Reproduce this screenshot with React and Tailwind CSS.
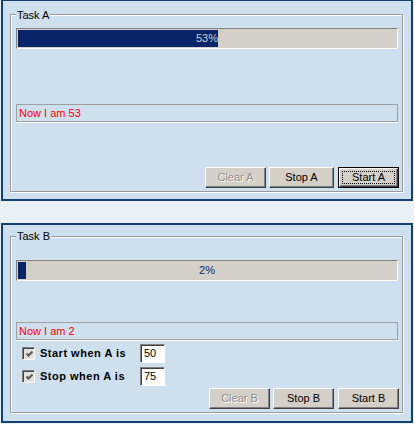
import React from 'react';

const FACE = 'bg-[#d4d0c8]';

function WinButton({ children, disabled, isDefault, width }) {
  if (isDefault) {
    return (
      <div className={`h-[21px] border border-black ${width}`}>
        <div className={`h-full ${FACE} border border-t-white border-l-white border-b-[#404040] border-r-[#404040] shadow-[inset_-1px_-1px_0_#808080] p-[2px]`}>
          <div className="h-full border border-dotted border-black flex items-center justify-center text-black">
            {children}
          </div>
        </div>
      </div>
    );
  }
  return (
    <div
      className={`h-[21px] ${width} ${FACE} border border-t-white border-l-white border-b-[#404040] border-r-[#404040] shadow-[inset_-1px_-1px_0_#808080] flex items-center justify-center ${
        disabled ? 'text-[#8d8d8d] text-shadow-[1px_1px_0_#ffffff]' : 'text-black'
      }`}
    >
      {children}
    </div>
  );
}

function ProgressBar({ value }) {
  // light text only matters once the fill reaches the centred label
  const showInverse = value > 45;
  return (
    <div className="ml-[5px] w-[382px] h-[21px] border border-t-[#808080] border-l-[#808080] border-b-white border-r-white bg-[#d4d0c8] p-[1px]">
      <div className="relative h-full w-full">
        <div className="absolute inset-0 flex items-center justify-center text-[#0a246a]">{value}%</div>
        <div className="absolute left-0 top-0 bottom-0 overflow-hidden bg-[#0a246a]" style={{ width: `${value}%` }}>
          {showInverse && (
            <div className="w-[378px] h-full flex items-center justify-center text-[#d4d0c8]">{value}%</div>
          )}
        </div>
      </div>
    </div>
  );
}

function StatusBox({ text }) {
  return (
    <div className="ml-[5px] w-[382px] h-[19px] border-b border-white">
      <div className="h-full border border-[#a0a0a0] flex items-center pl-[2px] text-[#ff0000]">{text}</div>
    </div>
  );
}

function GroupBox({ title, height, labelTop, children }) {
  return (
    <div
      className={`relative ml-[7px] w-[393px] ${height} border border-[#9a9a9a] shadow-[1px_1px_0_#ffffff,inset_1px_1px_0_#ffffff] flex flex-col`}
    >
      <span className={`absolute left-[5px] ${labelTop} h-[13px] leading-[13px] px-[1px] bg-[#cedfee] text-black`}>{title}</span>
      {children}
    </div>
  );
}

function CheckRow({ label, value }) {
  return (
    <div className="flex items-center h-[19px]">
      <div className="ml-[11px] w-[13px] h-[13px] border border-t-[#808080] border-l-[#808080] border-b-white border-r-white">
        <div className="w-full h-full bg-[#e4e2dc] shadow-[inset_1px_1px_0_#404040] flex items-center justify-center">
          <svg width="7" height="7" viewBox="0 0 7 7" className="ml-[1px] mt-[1px]">
            <polyline points="0.5,2.5 2.5,4.5 6.5,0.5" fill="none" stroke="#5a5a5a" strokeWidth="2" />
          </svg>
        </div>
      </div>
      <span className="ml-[5px] w-[100px] font-bold tracking-[0.5px] text-black">{label}</span>
      <div className="w-[25px] h-[19px] border border-t-[#808080] border-l-[#808080] border-b-white border-r-white">
        <div className="w-full h-full bg-white shadow-[inset_1px_1px_0_#404040] flex items-center pl-[3px] text-black">{value}</div>
      </div>
    </div>
  );
}

export default function App() {
  return (
    <div className="w-[414px] h-[424px] bg-[#e8f0f8] font-['Liberation_Sans',Arial,sans-serif] text-[11px] leading-none overflow-hidden">
      {/* Task A */}
      <div className="ml-[1px] w-[412px] h-[201px] bg-[#cedfee] border-x-2 border-b-2 border-t border-[#123f74] pt-[13px]">
        <GroupBox title="Task A" height="h-[178px]" labelTop="top-[-6px]">
          <div className="mt-[13px]">
            <ProgressBar value={53} />
          </div>
          <div className="mt-[55px]">
            <StatusBox text="Now I am 53" />
          </div>
          <div className="mt-[44px] flex justify-end pr-[3px]">
            <WinButton disabled width="w-[61px]">Clear A</WinButton>
            <div className="ml-[3px]">
              <WinButton width="w-[65px]">Stop A</WinButton>
            </div>
            <div className="ml-[4px]">
              <WinButton isDefault width="w-[61px]">Start A</WinButton>
            </div>
          </div>
        </GroupBox>
      </div>

      {/* Task B */}
      <div className="mt-[22px] ml-[1px] w-[412px] h-[200px] bg-[#cedfee] border-2 border-[#123f74] pt-[11px]">
        <GroupBox title="Task B" height="h-[177px]" labelTop="top-[-7px]">
          <div className="mt-[23px]">
            <ProgressBar value={2} />
          </div>
          <div className="mt-[41px]">
            <StatusBox text="Now I am 2" />
          </div>
          <div className="mt-[3px]">
            <CheckRow label="Start when A is" value="50" />
          </div>
          <div className="mt-[4px]">
            <CheckRow label="Stop when A is" value="75" />
          </div>
          <div className="mt-[2px] flex justify-end pr-[3px]">
            <WinButton disabled width="w-[61px]">Clear B</WinButton>
            <div className="ml-[3px]">
              <WinButton width="w-[61px]">Stop B</WinButton>
            </div>
            <div className="ml-[4px]">
              <WinButton width="w-[61px]">Start B</WinButton>
            </div>
          </div>
        </GroupBox>
      </div>
    </div>
  );
}
